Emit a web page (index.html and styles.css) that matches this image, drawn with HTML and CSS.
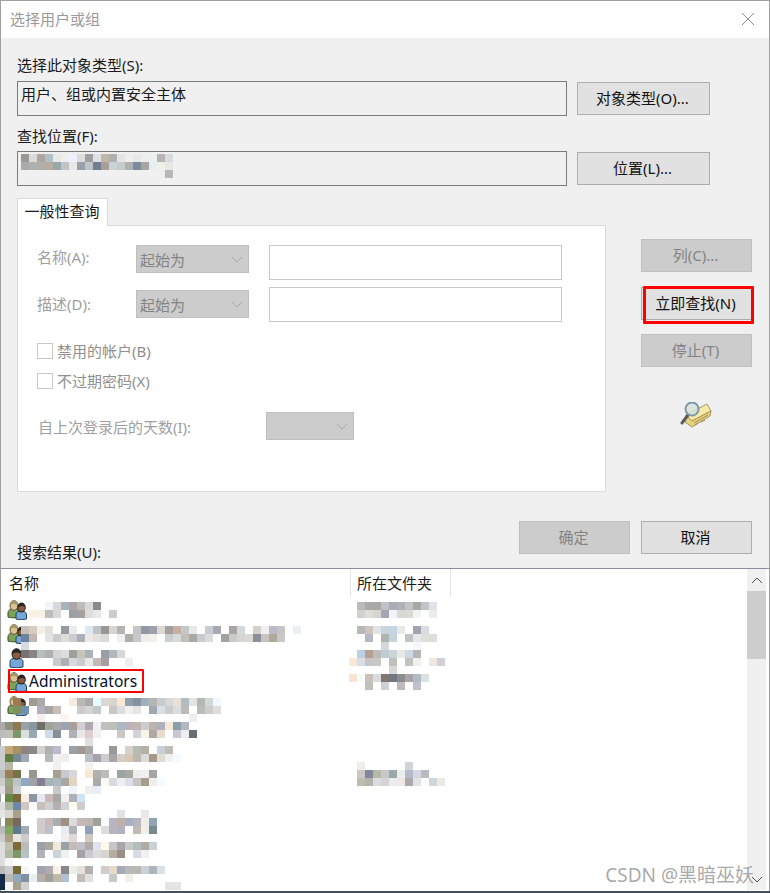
FILE: index.html
```html
<!DOCTYPE html>
<html lang="zh-CN">
<head>
    <meta charset="UTF-8">
    <title>选择用户或组</title>
    <link rel="stylesheet" href="styles.css">
</head>
<body>
    <svg width="0" height="0" class="defs">
        <symbol id="group-icon" viewBox="0 0 20 20">
            <path d="M1 17v-4c0-2 1-3 3-4h6c2 1 3 2 3 4v4c-2 1-10 1-12 0z" fill="#7ca35a" stroke="#3c4a2a" stroke-width="1"/>
            <ellipse cx="7" cy="5.500" rx="4" ry="4.800" fill="#dcc294" stroke="#5c5236" stroke-width="1"/>
            <path d="M3.500 5C3.500 2 5 1 7 1s3.500 1 3.500 4C8 4 6 3.500 3.500 5z" fill="#a89a5c"/>
            <path d="M9 19v-4c0-2 1-3 2-3.500h6c1.500.5 2.500 1.500 2.500 3.500v4c-2 .8-8.500.8-10.500 0z" fill="#74a6d8" stroke="#27405c" stroke-width="1"/>
            <ellipse cx="14.500" cy="7.500" rx="3.800" ry="4.500" fill="#8a5c3c" stroke="#1c1c1c" stroke-width="1"/>
            <path d="M11 7.500C11 4 13 3 14.500 3S18 4 18 7c-2-1.500-4-1.500-7 .5z" fill="#262626"/>
        </symbol>
        <symbol id="user-icon" viewBox="0 0 20 20">
            <path d="M3 19v-5c0-2 1-3 3-3.500h7c2 .5 3 1.500 3 3.500v5c-2 .8-11 .8-13 0z" fill="#74a6d8" stroke="#27405c" stroke-width="1"/>
            <ellipse cx="9.500" cy="6" rx="4.500" ry="5.300" fill="#8a5c3c" stroke="#1c1c1c" stroke-width="1"/>
            <path d="M5 6c0-4 2.500-5 4.500-5S14 2 14 5.500C11 4 8 4 5 6z" fill="#262626"/>
        </symbol>
        <symbol id="chevron" viewBox="0 0 12 7">
            <path d="M1 1l5 5 5-5" fill="none" stroke="currentColor" stroke-width="1"/>
        </symbol>
    </svg>

    <div class="dialog">
        <div class="titlebar">
            <span>选择用户或组</span>
            <svg class="close-icon" width="12" height="12" viewBox="0 0 12 12">
                <path d="M0 0l12 12M12 0L0 12" stroke="#8c8c8c" stroke-width="1" fill="none"/>
            </svg>
        </div>

        <div class="content">
            <div class="label first-label">选择此对象类型(S):</div>
            <div class="field-row">
                <div class="field">用户、组或内置安全主体</div>
                <button class="btn btn-wide">对象类型(O)...</button>
            </div>

            <div class="label second-label">查找位置(F):</div>
            <div class="field-row">
                <div class="field"></div>
                <button class="btn btn-wide">位置(L)...</button>
            </div>

            <div class="query-area">
                <div class="query-left">
                    <div class="tab">一般性查询</div>
                    <div class="tab-panel">
                        <div class="form-row">
                            <span class="form-label">名称(A):</span>
                            <div class="select select-wide">起始为<svg class="chevron" width="12" height="7"><use href="#chevron"/></svg></div>
                            <div class="text-input"></div>
                        </div>
                        <div class="form-row form-row-second">
                            <span class="form-label">描述(D):</span>
                            <div class="select select-wide select-low">起始为<svg class="chevron" width="12" height="7"><use href="#chevron"/></svg></div>
                            <div class="text-input"></div>
                        </div>
                        <div class="check-row check-first"><span class="checkbox"></span>禁用的帐户(B)</div>
                        <div class="check-row check-second"><span class="checkbox"></span>不过期密码(X)</div>
                        <div class="days-row">
                            <span class="days-label">自上次登录后的天数(I):</span>
                            <div class="select select-days"><svg class="chevron" width="12" height="7"><use href="#chevron"/></svg></div>
                        </div>
                    </div>
                </div>

                <div class="query-right">
                    <button class="btn btn-side" disabled>列(C)...</button>
                    <div class="find-wrap">
                        <button class="btn btn-side">立即查找(N)</button>
                        <div class="red-box find-box"></div>
                    </div>
                    <button class="btn btn-side btn-stop" disabled>停止(T)</button>
                    <svg class="search-icon" width="32" height="26" viewBox="0 0 32 26">
                        <path d="M6 13L27 2l4 7-19 10z" fill="#f5e9a8" stroke="#a8965c" stroke-width="1"/>
                        <path d="M6 13l6 6L31 9l-1 5-18 11-7-5z" fill="#e6d27f" stroke="#a8965c" stroke-width="1"/>
                        <path d="M14 21l14-8M15 23l3-2M21 20l4-2" stroke="#a08c50" stroke-width="1"/>
                        <path d="M8 13L2 21" stroke="#5c5c5c" stroke-width="3" stroke-linecap="round"/>
                        <circle cx="12" cy="7" r="6.500" fill="#d4e4dc" fill-opacity=".85" stroke="#7e98a8" stroke-width="2"/>
                    </svg>
                </div>
            </div>

            <div class="footer">
                <div class="results-label">搜索结果(U):</div>
                <button class="btn btn-side" disabled>确定</button>
                <button class="btn btn-side">取消</button>
            </div>
        </div>

        <div class="results">
            <div class="results-main">
                <div class="results-head">
                    <div class="col-name">名称</div>
                    <div class="col-folder">所在文件夹</div>
                </div>
                <div class="result-row"><svg class="user-icon"><use href="#group-icon"/></svg></div>
                <div class="result-row"><svg class="user-icon"><use href="#group-icon"/></svg></div>
                <div class="result-row"><svg class="user-icon"><use href="#user-icon"/></svg></div>
                <div class="result-row"><svg class="user-icon"><use href="#group-icon"/></svg><span class="result-name">Administrators</span></div>
                <div class="result-row"><svg class="user-icon"><use href="#group-icon"/></svg></div>
            </div>
            <div class="scrollbar">
                <div class="scroll-btn"><svg class="scroll-up" width="12" height="7"><use href="#chevron"/></svg></div>
                <div class="scroll-thumb"></div>
                <div class="scroll-track"></div>
                <div class="scroll-btn"><svg width="12" height="7"><use href="#chevron"/></svg></div>
            </div>
            <div class="red-box admin-box"></div>
            <div class="watermark">CSDN @黑暗巫妖</div>
        </div>
    </div>

    <!-- pixelated parts of the screenshot, coordinates are page pixels -->
    <svg class="mosaic" width="770" height="893">
        <g transform="translate(0,154)">
            <rect x="21" fill="#999990"/><rect x="29" fill="#dadada"/><rect x="37" fill="#b0a8a0"/><rect x="45" fill="#b0c0c8"/><rect x="53" fill="#e8eaea"/><rect x="61" fill="#eeeeee"/><rect x="69" fill="#eeeeff"/><rect x="77" fill="#dddddd"/><rect x="85" fill="#a0a0a0"/><rect x="93" fill="#dde0e4"/><rect x="101" fill="#c0b8a8"/><rect x="109" fill="#b0b0b0"/><rect x="117" fill="#e4e4e4"/><rect x="125" fill="#eeeeee"/><rect x="133" fill="#e8e8e8"/><rect x="141" fill="#eeeeee"/><rect x="149" fill="#e8f0f0"/><rect x="157" fill="#b8b4b4"/><rect x="165" fill="#d8dce0"/>
        </g>
        <g transform="translate(0,162)">
            <rect x="21" fill="#aaaaaa"/><rect x="29" fill="#b0b0b0"/><rect x="37" fill="#b0b0a8"/><rect x="45" fill="#b8aca0"/><rect x="53" fill="#98a8a8"/><rect x="61" fill="#c0c4c4"/><rect x="69" fill="#e8e8e8"/><rect x="77" fill="#98a0a8"/><rect x="85" fill="#c0c4c8"/><rect x="93" fill="#708090"/><rect x="101" fill="#a8a098"/><rect x="109" fill="#c8d4dc"/><rect x="117" fill="#c8ccc8"/><rect x="125" fill="#b0b0b0"/><rect x="133" fill="#7c8ca0"/><rect x="141" fill="#a8a4a0"/><rect x="149" fill="#e4f0f0"/><rect x="157" fill="#f0f0e4"/><rect x="165" fill="#e8e8e8"/>
        </g>
        <g transform="translate(0,170)"><rect x="165" fill="#b8b8b8"/></g>

        <g transform="translate(0,602)">
            <rect x="45" fill="#f2f5f8"/><rect x="53" fill="#d8d8d8"/><rect x="61" fill="#a8b4bc"/><rect x="69" fill="#b0a5a5"/><rect x="77" fill="#bcbcbc"/><rect x="85" fill="#d8d8d8"/><rect x="93" fill="#8a8a8a"/>
            <rect x="357" fill="#b8bcbc"/><rect x="365" fill="#aca8a8"/><rect x="373" fill="#a8a8a8"/><rect x="381" fill="#c0c0c8"/><rect x="389" fill="#a8acb8"/><rect x="397" fill="#b0b0b8"/><rect x="405" fill="#c0c4c4"/><rect x="413" fill="#a8a8a4"/><rect x="421" fill="#c0c4c8"/><rect x="429" fill="#e0e4e8"/>
        </g>
        <g transform="translate(0,610)">
            <rect x="29" fill="#faf0e4"/><rect x="37" fill="#f8f2e6"/><rect x="45" fill="#bdbdbd"/><rect x="53" fill="#d8d8d8"/><rect x="69" fill="#9aa0a8"/><rect x="77" fill="#a8a09a"/><rect x="85" fill="#dddddd"/><rect x="93" fill="#e8e8e8"/><rect x="109" fill="#cccccc"/>
            <rect x="357" fill="#d0d0cc"/><rect x="365" fill="#e0dcd8"/><rect x="373" fill="#d8d4d0"/><rect x="381" fill="#a8a4b8"/><rect x="389" fill="#f0f4fb"/><rect x="397" fill="#dcd8d4"/><rect x="405" fill="#dcd8d4"/><rect x="413" fill="#f0f4f4"/><rect x="429" fill="#ececec"/>
        </g>
        <g transform="translate(0,626)">
            <rect x="21" fill="#c8c0b8"/><rect x="29" fill="#d8ccc0"/><rect x="37" fill="#f3eeea"/><rect x="45" fill="#e5e0dc"/><rect x="61" fill="#959aa0"/><rect x="69" fill="#e8ecee"/><rect x="85" fill="#dce9f5"/><rect x="93" fill="#c0c4c8"/><rect x="101" fill="#999590"/><rect x="109" fill="#d5d5d5"/><rect x="117" fill="#b5b5ad"/><rect x="133" fill="#c5c5c5"/><rect x="141" fill="#8f98a5"/><rect x="149" fill="#a0a0a8"/><rect x="157" fill="#ddd8d4"/><rect x="165" fill="#a5a0a0"/><rect x="173" fill="#c8b0a0"/><rect x="181" fill="#c5c8c8"/><rect x="189" fill="#e8e8e8"/><rect x="205" fill="#c8ccd4"/><rect x="213" fill="#a5aab5"/><rect x="229" fill="#aaa5a0"/><rect x="237" fill="#d5d8dc"/><rect x="253" fill="#d5cfcc"/><rect x="261" fill="#f0eeee"/><rect x="269" fill="#bcb8c8"/><rect x="277" fill="#c5c5c5"/><rect x="293" fill="#e8f0f4"/>
            <rect x="357" fill="#b8b8b8"/><rect x="365" fill="#d0c4bc"/><rect x="373" fill="#e0e4e4"/><rect x="381" fill="#c8d4dc"/><rect x="389" fill="#c4d4e0"/><rect x="397" fill="#e8e8e4"/><rect x="413" fill="#a0a4b0"/><rect x="421" fill="#d8dce0"/>
        </g>
        <g transform="translate(0,634)">
            <rect x="21" fill="#6b829e"/><rect x="29" fill="#c0b8b0"/><rect x="45" fill="#e0e4e4"/><rect x="53" fill="#cccccc"/><rect x="61" fill="#dddddd"/><rect x="69" fill="#cccccc"/><rect x="77" fill="#aab0b8"/><rect x="85" fill="#eee8e4"/><rect x="93" fill="#e4e0dc"/><rect x="101" fill="#d8dcd8"/><rect x="117" fill="#f0f0f0"/><rect x="125" fill="#b0aca8"/><rect x="133" fill="#c8c8c8"/><rect x="141" fill="#f0ece8"/><rect x="149" fill="#f4f0ec"/><rect x="165" fill="#c8d0d0"/><rect x="173" fill="#d8dcd8"/><rect x="181" fill="#c0c0b8"/><rect x="189" fill="#a8a8a8"/><rect x="197" fill="#c8ccd0"/><rect x="205" fill="#d8dcdc"/><rect x="221" fill="#a0a4a0"/><rect x="229" fill="#c8ccc8"/><rect x="237" fill="#d8d4d0"/><rect x="245" fill="#dcd8d4"/><rect x="253" fill="#8a9098"/><rect x="261" fill="#c8c4c0"/><rect x="269" fill="#b0a898"/><rect x="277" fill="#c8c8c8"/>
            <rect x="365" fill="#b4b8c4"/><rect x="381" fill="#b0b4b0"/><rect x="389" fill="#c8d4dc"/><rect x="405" fill="#c0c4c4"/><rect x="413" fill="#e4e8e8"/><rect x="421" fill="#dededa"/><rect x="429" fill="#dededa"/>
        </g>
        <g transform="translate(0,642)">
            <rect x="21" fill="#d8dce0"/><rect x="381" fill="#d4d8dc"/><rect x="413" fill="#f4f8fc"/>
        </g>
        <g transform="translate(0,650)">
            <rect x="21" fill="#7a7272"/><rect x="29" fill="#8a8585"/><rect x="37" fill="#b5bfbb"/><rect x="45" fill="#b0b0b0"/><rect x="53" fill="#d5d5d5"/><rect x="61" fill="#dddddd"/><rect x="69" fill="#a0a09a"/><rect x="77" fill="#c5c5b8"/><rect x="85" fill="#a9b2ba"/><rect x="101" fill="#9a9ea8"/><rect x="109" fill="#b0b8bc"/><rect x="117" fill="#d8d8d8"/>
            <rect x="357" fill="#bcd0e4"/><rect x="365" fill="#b4a090"/><rect x="373" fill="#c0bcb8"/><rect x="381" fill="#c0ccd4"/><rect x="389" fill="#ccd4d8"/><rect x="397" fill="#e8e8e4"/><rect x="405" fill="#ccd8e4"/><rect x="413" fill="#b8b4b8"/>
        </g>
        <g transform="translate(0,658)">
            <rect x="53" fill="#c5ccd0"/><rect x="61" fill="#b0b0b0"/><rect x="69" fill="#d5dae0"/><rect x="77" fill="#cccccc"/><rect x="85" fill="#e8e8e8"/><rect x="93" fill="#c5b8b8"/><rect x="101" fill="#a8a0a0"/><rect x="125" fill="#eeeeee"/>
            <rect x="349" fill="#f8e8d8"/><rect x="357" fill="#d8dce4"/><rect x="365" fill="#c8c4c8"/><rect x="373" fill="#c8c8c8"/><rect x="389" fill="#c0c0b8"/><rect x="405" fill="#c0c4c0"/><rect x="413" fill="#f0f0ec"/><rect x="429" fill="#f0e8e0"/><rect x="437" fill="#d0d0d8"/>
        </g>
        <g transform="translate(0,666)"><rect x="389" fill="#d8d8d8"/></g>
        <g transform="translate(0,674)">
            <rect x="349" fill="#f8e4d0"/><rect x="357" fill="#f4fcf8"/><rect x="365" fill="#ccc0b8"/><rect x="373" fill="#d8dcdc"/><rect x="381" fill="#807870"/><rect x="389" fill="#707888"/><rect x="397" fill="#8c8c8c"/><rect x="405" fill="#a8a4a8"/><rect x="413" fill="#b0bcc4"/><rect x="421" fill="#dce0e0"/>
        </g>
        <g transform="translate(0,682)">
            <rect x="365" fill="#c0c0bc"/><rect x="381" fill="#d0d0d4"/><rect x="397" fill="#c0b8b8"/><rect x="413" fill="#c0c0cc"/>
        </g>
        <g transform="translate(0,698)">
            <rect x="13" fill="#9a7b55"/><rect x="29" fill="#a59a90"/><rect x="37" fill="#aaaaaa"/><rect x="69" fill="#f5ebe0"/><rect x="77" fill="#b8b8b8"/><rect x="85" fill="#aaaaaa"/><rect x="93" fill="#e5ffff"/><rect x="101" fill="#ddd8d4"/><rect x="109" fill="#d8d4d0"/><rect x="117" fill="#fbe8d4"/><rect x="125" fill="#8f9fb0"/><rect x="133" fill="#888fa0"/><rect x="141" fill="#9fb0bd"/><rect x="149" fill="#b5b8b0"/><rect x="157" fill="#c8ccd0"/><rect x="165" fill="#d5d8d8"/><rect x="173" fill="#e8e0d5"/><rect x="181" fill="#b0bcc0"/><rect x="189" fill="#e4e4e0"/><rect x="197" fill="#b0b8b0"/><rect x="205" fill="#d0d8dc"/><rect x="213" fill="#f2f8ff"/>
        </g>
        <g transform="translate(0,706)">
            <rect x="13" fill="#7d9060"/><rect x="21" fill="#7090b0"/><rect x="37" fill="#b5b0c0"/><rect x="45" fill="#a8a5a5"/><rect x="53" fill="#c8bdb5"/><rect x="77" fill="#cccccc"/><rect x="85" fill="#d5d5d5"/><rect x="93" fill="#c0c8c8"/><rect x="109" fill="#c8c8c8"/><rect x="117" fill="#dddddd"/><rect x="125" fill="#f0f0ee"/><rect x="133" fill="#e5e5e5"/><rect x="149" fill="#a0a8b0"/><rect x="157" fill="#d8e0e5"/><rect x="165" fill="#cccccc"/><rect x="173" fill="#dddddd"/><rect x="181" fill="#bbbbbb"/><rect x="197" fill="#bbbbbb"/><rect x="205" fill="#cccccc"/><rect x="213" fill="#dddddd"/>
        </g>
        <g transform="translate(0,714)"><rect x="37" fill="#f7eeee"/><rect x="61" fill="#fff3f0"/><rect x="189" fill="#eeeeee"/></g>
        <g transform="translate(0,722)">
            <rect x="-3" fill="#aaaaaa"/><rect x="5" fill="#909080"/><rect x="13" fill="#8f7a50"/><rect x="21" fill="#98a0a8"/><rect x="29" fill="#8a96a0"/><rect x="37" fill="#707066"/><rect x="45" fill="#a0a498"/><rect x="53" fill="#a8a8a8"/><rect x="61" fill="#98a4b0"/><rect x="69" fill="#aaa098"/><rect x="77" fill="#d0d0d0"/><rect x="85" fill="#b0a8b0"/><rect x="93" fill="#eef2f4"/><rect x="101" fill="#c0c0c0"/><rect x="109" fill="#bcc0b8"/><rect x="117" fill="#a8b8c4"/><rect x="125" fill="#c0b0b8"/><rect x="133" fill="#c0b8b0"/><rect x="141" fill="#cccccc"/><rect x="149" fill="#bdb5ad"/><rect x="157" fill="#b0b0bf"/><rect x="165" fill="#f5e8d5"/><rect x="173" fill="#8a9eaa"/><rect x="181" fill="#b5b8c0"/>
        </g>
        <g transform="translate(0,730)">
            <rect x="-3" fill="#bbbbbb"/><rect x="5" fill="#c0c0b8"/><rect x="13" fill="#7a9a6a"/><rect x="21" fill="#dddddd"/><rect x="29" fill="#98a8b0"/><rect x="45" fill="#cddce8"/><rect x="53" fill="#8a9098"/><rect x="69" fill="#b0b0b8"/><rect x="77" fill="#e8e8e8"/><rect x="85" fill="#e0cccc"/><rect x="93" fill="#f0f0f0"/><rect x="117" fill="#ccc8c4"/><rect x="133" fill="#d0d4d8"/><rect x="141" fill="#fbf3e5"/><rect x="149" fill="#b0a8a8"/><rect x="157" fill="#e8dccf"/><rect x="173" fill="#c8c8d4"/><rect x="181" fill="#eeeeee"/><rect x="189" fill="#666e72"/>
        </g>
        <g transform="translate(0,738)"><rect x="85" fill="#e0e0e0"/></g>
        <g transform="translate(0,746)">
            <rect x="-3" fill="#cccccc"/><rect x="5" fill="#c8a878"/><rect x="13" fill="#a89068"/><rect x="21" fill="#8a8580"/><rect x="29" fill="#8a8888"/><rect x="37" fill="#d5d0d0"/><rect x="45" fill="#b0b0b0"/><rect x="53" fill="#c0b8d0"/><rect x="69" fill="#98a0a8"/><rect x="77" fill="#a0988f"/><rect x="85" fill="#a8a8a8"/><rect x="109" fill="#999999"/><rect x="125" fill="#d8d0c8"/><rect x="133" fill="#b5bbb5"/><rect x="141" fill="#b5b0a0"/><rect x="157" fill="#c8d0d8"/><rect x="165" fill="#c0bdb5"/>
        </g>
        <g transform="translate(0,754)">
            <rect x="-3" fill="#cccccc"/><rect x="5" fill="#5f8040"/><rect x="13" fill="#788898"/><rect x="21" fill="#a0a8b0"/><rect x="45" fill="#b5bbbd"/><rect x="53" fill="#f0f0f0"/><rect x="61" fill="#eeeeee"/><rect x="85" fill="#bcc0c8"/><rect x="93" fill="#a8a0b0"/><rect x="101" fill="#cccccc"/><rect x="109" fill="#a8a5a8"/><rect x="117" fill="#d5ccc5"/><rect x="125" fill="#d8c8b0"/><rect x="133" fill="#bbb8b0"/><rect x="141" fill="#dadada"/><rect x="149" fill="#a89888"/><rect x="157" fill="#e0dcd5"/><rect x="165" fill="#f0f0f0"/><rect x="173" fill="#f5faff"/>
        </g>
        <g transform="translate(0,762)">
            <rect x="-3" fill="#cccccc"/><rect x="5" fill="#b8b8a8"/><rect x="53" fill="#f0f0f0"/><rect x="85" fill="#f5f0ee"/>
            <rect x="357" fill="#f0ece8"/><rect x="405" fill="#d0d4d8"/>
        </g>
        <g transform="translate(0,770)">
            <rect x="-3" fill="#bbbbbb"/><rect x="5" fill="#9a8058"/><rect x="13" fill="#787048"/><rect x="29" fill="#98988a"/><rect x="53" fill="#a8a090"/><rect x="61" fill="#c8c8d0"/><rect x="69" fill="#d8d8d8"/><rect x="85" fill="#f8e8d5"/><rect x="93" fill="#b0b0b0"/><rect x="101" fill="#bcbcb8"/><rect x="117" fill="#9aa5a5"/><rect x="125" fill="#a8a8a0"/><rect x="133" fill="#eeeeee"/><rect x="141" fill="#f0f0f0"/><rect x="149" fill="#a5a5a5"/>
            <rect x="357" fill="#ccc8c4"/><rect x="365" fill="#8088a0"/><rect x="373" fill="#b8b8a8"/><rect x="381" fill="#c8c8c8"/><rect x="389" fill="#98a8ac"/><rect x="397" fill="#e8f0ec"/><rect x="405" fill="#b8b8cc"/><rect x="413" fill="#d4d8e4"/><rect x="421" fill="#b8bcbc"/>
        </g>
        <g transform="translate(0,778)">
            <rect x="-3" fill="#cccccc"/><rect x="5" fill="#98a880"/><rect x="13" fill="#c0c4c8"/><rect x="21" fill="#90a8c0"/><rect x="29" fill="#a0a0a8"/><rect x="37" fill="#887c90"/><rect x="45" fill="#a5b5b5"/><rect x="53" fill="#aeb8c0"/><rect x="61" fill="#a8a8a0"/><rect x="69" fill="#e5d5c0"/><rect x="77" fill="#fafcff"/><rect x="93" fill="#aaaaaa"/><rect x="101" fill="#fff9f5"/><rect x="109" fill="#d5dce0"/><rect x="117" fill="#eeeeee"/><rect x="125" fill="#ddddee"/><rect x="133" fill="#c8c5c0"/><rect x="141" fill="#a89c8c"/><rect x="149" fill="#eeeeee"/><rect x="157" fill="#f5fbff"/>
            <rect x="357" fill="#c0bcb4"/><rect x="365" fill="#b4b4ac"/><rect x="373" fill="#dcdcdc"/><rect x="381" fill="#d4d4d8"/><rect x="389" fill="#ececec"/><rect x="397" fill="#f0e8e4"/><rect x="405" fill="#aca8ac"/><rect x="413" fill="#e0e4e4"/><rect x="429" fill="#ccd8e0"/><rect x="437" fill="#ece8e4"/>
        </g>
        <g transform="translate(0,786)">
            <rect x="-3" fill="#dddddd"/><rect x="5" fill="#a09a88"/><rect x="13" fill="#ccd0d0"/><rect x="53" fill="#c8c8c8"/><rect x="69" fill="#f0f4f8"/><rect x="85" fill="#eeeeee"/><rect x="93" fill="#e5eef8"/>
        </g>
        <g transform="translate(0,794)">
            <rect x="5" fill="#688848"/><rect x="13" fill="#7a6838"/><rect x="21" fill="#f8f0e8"/><rect x="29" fill="#8a96a0"/><rect x="37" fill="#e5e8f0"/><rect x="45" fill="#ccb8b8"/><rect x="53" fill="#a8a8a8"/><rect x="61" fill="#f0f0f0"/><rect x="69" fill="#b0b0b8"/><rect x="77" fill="#d0e4f8"/>
        </g>
        <g transform="translate(0,802)">
            <rect x="-3" fill="#dddddd"/><rect x="5" fill="#a8b8a0"/><rect x="13" fill="#7088a8"/><rect x="21" fill="#d0c8c0"/><rect x="37" fill="#c8c0b8"/><rect x="45" fill="#ccd0d0"/><rect x="53" fill="#b8b0b0"/><rect x="61" fill="#d0d4d8"/><rect x="69" fill="#fffff0"/><rect x="77" fill="#d0ccd0"/>
        </g>
        <g transform="translate(0,810)">
            <rect x="-3" fill="#e5e5e5"/><rect x="5" fill="#d8d8d0"/><rect x="13" fill="#a8a088"/><rect x="117" fill="#e0e4e8"/><rect x="141" fill="#e8e8e8"/>
        </g>
        <g transform="translate(0,818)">
            <rect x="5" fill="#8a8a58"/><rect x="13" fill="#786860"/><rect x="37" fill="#d0cccc"/><rect x="45" fill="#ccb8b8"/><rect x="53" fill="#a8aeb0"/><rect x="61" fill="#a09080"/><rect x="69" fill="#d8dce0"/><rect x="77" fill="#c8b8b8"/><rect x="85" fill="#c0b8b0"/><rect x="93" fill="#a0a098"/><rect x="101" fill="#f8fcff"/><rect x="109" fill="#b8b4c0"/><rect x="117" fill="#c0b0a8"/><rect x="125" fill="#a5b0c0"/><rect x="133" fill="#b8b4c0"/><rect x="141" fill="#eeeeea"/><rect x="149" fill="#90a5b5"/>
        </g>
        <g transform="translate(0,826)">
            <rect x="-3" fill="#bbbbbb"/><rect x="5" fill="#80a860"/><rect x="13" fill="#607890"/><rect x="21" fill="#a0a8b0"/><rect x="37" fill="#d0ccc8"/><rect x="45" fill="#c0c0cc"/><rect x="61" fill="#e8ecf0"/><rect x="69" fill="#b0b4b8"/><rect x="85" fill="#90a0b8"/><rect x="101" fill="#e0dcd8"/><rect x="109" fill="#b8b4bc"/><rect x="117" fill="#b0b0c0"/><rect x="133" fill="#c0bcb4"/><rect x="141" fill="#f0f0e8"/><rect x="149" fill="#788a90"/>
        </g>
        <g transform="translate(0,834)">
            <rect x="-3" fill="#cccccc"/><rect x="5" fill="#a8a080"/><rect x="13" fill="#e5e5e0"/><rect x="21" fill="#cccccc"/><rect x="53" fill="#f8fbff"/><rect x="61" fill="#eeeeee"/><rect x="69" fill="#e0d8d4"/><rect x="85" fill="#d0c8c4"/>
        </g>
        <g transform="translate(0,842)">
            <rect x="-3" fill="#dddddd"/><rect x="5" fill="#c0c0b0"/><rect x="13" fill="#806838"/><rect x="21" fill="#bbbbbb"/><rect x="37" fill="#98a0a8"/><rect x="45" fill="#a8a8a0"/><rect x="53" fill="#f0e8d8"/><rect x="61" fill="#98a0a8"/><rect x="69" fill="#c8b8b8"/><rect x="77" fill="#c0c0c8"/><rect x="85" fill="#b0acac"/><rect x="93" fill="#e0e4ec"/><rect x="101" fill="#fff8e8"/><rect x="109" fill="#c8c4cc"/><rect x="117" fill="#a8a4a8"/><rect x="125" fill="#c8c8c8"/><rect x="133" fill="#b0c0b8"/><rect x="141" fill="#b0aca4"/><rect x="149" fill="#c8d0d8"/>
        </g>
        <g transform="translate(0,850)">
            <rect x="-3" fill="#dddddd"/><rect x="5" fill="#b0b8a8"/><rect x="13" fill="#7a9868"/><rect x="21" fill="#b8c0c8"/><rect x="37" fill="#b0b4b8"/><rect x="53" fill="#c8d4d8"/><rect x="61" fill="#f0f0f0"/><rect x="77" fill="#a8a0a8"/><rect x="85" fill="#d0c8d0"/><rect x="93" fill="#dcdcdc"/><rect x="101" fill="#d8d4d0"/><rect x="109" fill="#b8aca0"/><rect x="117" fill="#989088"/><rect x="133" fill="#d8dce4"/><rect x="141" fill="#f0f0f0"/>
        </g>
        <g transform="translate(0,858)"><rect x="-3" fill="#dddddd"/><rect x="5" fill="#f5f5f5"/></g>
        <g transform="translate(0,866)">
            <rect x="-3" fill="#bbbbbb"/><rect x="5" fill="#cccccc"/><rect x="13" fill="#786838"/><rect x="21" fill="#f5f5f5"/><rect x="37" fill="#a0a4b0"/><rect x="45" fill="#b0acb0"/><rect x="53" fill="#f8f0e8"/><rect x="61" fill="#888888"/><rect x="69" fill="#e8f0e8"/><rect x="77" fill="#e8e0dc"/><rect x="85" fill="#b0b0b0"/><rect x="101" fill="#d0ccc8"/><rect x="109" fill="#e8d8c8"/><rect x="117" fill="#a8a8b8"/><rect x="125" fill="#b8b8b8"/><rect x="133" fill="#b8b8b0"/><rect x="141" fill="#c8d0d8"/><rect x="149" fill="#b0b4b8"/><rect x="157" fill="#d8e0e8"/>
        </g>
        <g transform="translate(0,874)">
            <rect x="-3" fill="#142a48"/><rect x="5" fill="#b8b8b0"/><rect x="13" fill="#90a8c0"/><rect x="21" fill="#8090a0"/><rect x="29" fill="#e8f0f0"/><rect x="37" fill="#b8b0a8"/><rect x="45" fill="#a0a098"/><rect x="53" fill="#c0b8a8"/><rect x="61" fill="#b0c0d0"/><rect x="77" fill="#c0bcb8"/><rect x="85" fill="#e0e0e0"/><rect x="109" fill="#c8c8c8"/><rect x="125" fill="#f0f0e8"/>
        </g>
        <g transform="translate(0,882)">
            <rect x="-3" fill="#142a48"/><rect x="5" fill="#f5f5f5"/><rect x="13" fill="#a8a090"/><rect x="21" fill="#d0d0d0"/><rect x="165" fill="#e4e4e4"/><rect x="173" fill="#e4e4e4"/>
        </g>
    </svg>
</body>
</html>
```

FILE: styles.css
```css
body {
    position: relative;
    width: 770px;
    height: 893px;
    margin: 0;
    overflow: hidden;
    background-color: #45505c;
    font-family: "Noto Sans", "Noto Sans CJK SC", sans-serif;
    font-size: 15px;
    color: #1a1a1a;
}

.defs {
    position: absolute;
}

.dialog {
    display: flex;
    flex-direction: column;
    box-sizing: border-box;
    width: 770px;
    height: 891px;
    border: 1px solid #a0a0a0;
    border-bottom: none;
    background-color: #f0f0f0;
}

/* Title bar */
.titlebar {
    display: flex;
    justify-content: space-between;
    align-items: center;
    box-sizing: border-box;
    height: 37px;
    padding: 0 15px 2px 9px;
    background-color: #fff;
    color: #999;
}

/* Upper part of the dialog */
.content {
    padding: 0 17px 0 16px;
}

.label {
    height: 20px;
    line-height: 20px;
    margin-bottom: 5px;
}

.first-label {
    margin-top: 18px;
    line-height: 18px;
}

.second-label {
    margin-top: 10px;
}

.field-row {
    display: flex;
    align-items: center;
    gap: 10px;
}

.field {
    box-sizing: border-box;
    width: 550px;
    height: 35px;
    padding: 0 3px;
    line-height: 24px;
    border: 1px solid #7a7a7a;
}

.btn {
    box-sizing: border-box;
    height: 33px;
    padding: 0 2px 2px 0;
    border: 1px solid #adadad;
    background-color: #e1e1e1;
    color: #111;
    font-family: inherit;
    font-size: 15px;
}

.btn:disabled {
    border-color: #bfbfbf;
    background-color: #ccc;
    color: #838383;
}

.btn-wide {
    width: 133px;
}

.btn-side {
    width: 111px;
}

/* Query tab and side buttons */
.query-area {
    display: flex;
    gap: 35px;
    margin-top: 12px;
}

.tab {
    position: relative;
    z-index: 1;
    box-sizing: border-box;
    width: 91px;
    height: 28px;
    margin-bottom: -1px;
    padding-right: 1px;
    border: 1px solid #d9d9d9;
    border-bottom: none;
    background-color: #fff;
    line-height: 24px;
    text-align: center;
}

.tab-panel {
    box-sizing: border-box;
    width: 589px;
    height: 267px;
    padding: 19px 0 0 19px;
    border: 1px solid #d9d9d9;
    background-color: #fff;
    color: #a0a0a0;
}

.form-row {
    display: flex;
    align-items: flex-start;
}

.form-row-second {
    margin-top: 7px;
}

.form-label {
    width: 99px;
    line-height: 24px;
}

.form-row-second .form-label {
    line-height: 34px;
}

.select {
    display: flex;
    justify-content: space-between;
    align-items: center;
    box-sizing: border-box;
    height: 28px;
    padding: 0 3px;
    border: 1px solid #bfbfbf;
    background-color: #ccc;
    color: #838383;
}

.select-wide {
    width: 113px;
    margin-right: 20px;
}

.select-low {
    margin-top: 3px;
}

.select-days {
    justify-content: flex-end;
    width: 88px;
}

.chevron {
    margin-right: 2px;
    color: #a8a8a8;
}

.text-input {
    box-sizing: border-box;
    width: 293px;
    height: 35px;
    border: 1px solid #c8c8c8;
    background-color: #fff;
}

.check-row {
    display: flex;
    align-items: flex-start;
    gap: 4px;
    height: 18px;
    line-height: 16px;
    color: #8f8f8f;
}

.check-first {
    margin-top: 21px;
}

.check-second {
    margin-top: 12px;
}

.checkbox {
    box-sizing: border-box;
    width: 16px;
    height: 16px;
    border: 1px solid #c8c8c8;
    background-color: #fff;
}

.days-row {
    display: flex;
    align-items: center;
    margin-top: 21px;
}

.days-label {
    width: 228px;
    margin-left: 1px;
}

.query-right {
    display: flex;
    flex-direction: column;
    padding-top: 41px;
}

.find-wrap {
    position: relative;
    margin: 15px 0 14px;
    height: 33px;
}

.search-icon {
    margin: 35px 0 0 39px;
}

.red-box {
    position: absolute;
    box-sizing: border-box;
    border: 3px solid #f00;
    border-radius: 1px;
}

.find-box {
    top: -1px;
    left: 2px;
    width: 111px;
    height: 38px;
}

/* Footer buttons, results label sits at the bottom of the same row */
.footer {
    display: flex;
    justify-content: flex-end;
    gap: 11px;
    height: 47px;
    margin-top: 29px;
}

.results-label {
    align-self: flex-end;
    margin-right: auto;
    margin-bottom: 6px;
    line-height: 20px;
}

/* Results list */
.results {
    position: relative;
    display: flex;
    flex: 1;
    min-height: 0;
    padding-right: 3px;
    border-top: 1px solid #8c8c9c;
    background-color: #fff;
}

.results-main {
    flex: 1;
}

.results-head {
    display: flex;
    height: 28px;
    line-height: 28px;
}

.col-name {
    width: 341px;
    padding-left: 8px;
    border-right: 1px solid #e5e5e5;
}

.col-folder {
    width: 93px;
    padding-left: 6px;
    border-right: 1px solid #e5e5e5;
}

.result-row {
    display: flex;
    align-items: center;
    gap: 2px;
    height: 24px;
    padding-left: 6px;
    color: #111;
}

.results-head + .result-row {
    margin-top: 1px;
}

.result-name {
    margin-bottom: 3px;
    font-size: 15.500px;
    color: #001028;
}

.user-icon {
    flex: none;
    width: 20px;
    height: 20px;
}

.scrollbar {
    display: flex;
    flex-direction: column;
    width: 19px;
    margin-bottom: 1px;
    background-color: #f0f0f0;
}

.scroll-btn {
    display: flex;
    justify-content: center;
    align-items: center;
    height: 22px;
    color: #505050;
}

.scroll-up {
    transform: rotate(180deg);
}

.scroll-thumb {
    height: 68px;
    background-color: #cdcdcd;
}

.scroll-track {
    flex: 1;
}

.admin-box {
    top: 100px;
    left: 7px;
    width: 136px;
    height: 24px;
    border-width: 2px;
}

.watermark {
    position: absolute;
    right: 15px;
    bottom: 3px;
    color: rgba(130, 130, 130, 0.7);
    font-size: 19px;
    line-height: 26px;
    white-space: nowrap;
}

/* Mosaic over the hidden text */
.mosaic {
    position: absolute;
    top: 0;
    left: 0;
    pointer-events: none;
}

.mosaic rect {
    width: 8px;
    height: 8px;
}
```
